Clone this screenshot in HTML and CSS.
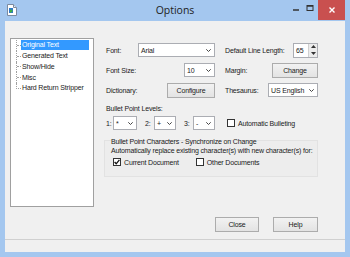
FILE: index.html
```html
<!DOCTYPE html>
<html lang="en">
<head>
  <meta charset="UTF-8" />
  <title>Options</title>
  <link rel="stylesheet" href="styles.css">
</head>
<body>
  <div class="window">
    <!-- Title bar -->
    <div class="titlebar">
      <svg class="app-icon" width="10" height="12" viewBox="0 0 10 12">
        <path d="M0.5 0.5h6l3 3v8h-9z" fill="#fff" stroke="#7a8aa0"/>
        <path d="M6.5 0.5v3h3" fill="#dde6f0" stroke="#7a8aa0"/>
        <rect x="2" y="4" width="4" height="5" fill="#2f78c8"/>
        <path d="M3 5l3 2-3 2z" fill="#3fb040"/>
      </svg>
      <div class="title">Options</div>
      <div class="controls">
        <span class="ctl"><svg width="8" height="8" viewBox="0 0 8 8"><path d="M1 6h6" stroke="#333" stroke-width="1.5"/></svg></span>
        <span class="ctl"><svg width="8" height="8" viewBox="0 0 8 8"><rect x="1" y="1.5" width="6" height="5" fill="none" stroke="#333"/><path d="M1 2h6" stroke="#333" stroke-width="1.5"/></svg></span>
        <span class="ctl close"><svg width="8" height="8" viewBox="0 0 8 8"><path d="M1.5 1.5l5 5M6.5 1.5l-5 5" stroke="#fff" stroke-width="1.4"/></svg></span>
      </div>
    </div>

    <div class="client">
      <div class="main">
        <!-- Page tree -->
        <ul class="tree">
          <li><span class="node selected">Original Text</span></li>
          <li><span class="node">Generated Text</span></li>
          <li><span class="node">Show/Hide</span></li>
          <li><span class="node">Misc</span></li>
          <li class="last"><span class="node">Hard Return Stripper</span></li>
        </ul>

        <!-- Page content -->
        <div class="page">
          <div class="form-grid">
            <div class="cell">
              <span>Font:</span>
              <div class="select w-font"><span>Arial</span><svg class="chev" width="5" height="3" viewBox="0 0 5 3"><path d="M0.3 0.3l2.2 2.2 2.2-2.2" fill="none" stroke="#444"/></svg></div>
            </div>
            <div class="cell">
              <span>Default Line Length:</span>
              <div class="spin">
                <span>65</span>
                <div class="spin-btns">
                  <svg width="5" height="3" viewBox="0 0 5 3"><path d="M0 3l2.5-3 2.5 3z" fill="#333"/></svg>
                  <svg width="5" height="3" viewBox="0 0 5 3"><path d="M0 0l2.5 3 2.5-3z" fill="#333"/></svg>
                </div>
              </div>
            </div>

            <div class="cell">
              <span>Font Size:</span>
              <div class="select w-size"><span>10</span><svg class="chev" width="5" height="3" viewBox="0 0 5 3"><path d="M0.3 0.3l2.2 2.2 2.2-2.2" fill="none" stroke="#444"/></svg></div>
            </div>
            <div class="cell">
              <span>Margin:</span>
              <div class="btn w-change">Change</div>
            </div>

            <div class="cell">
              <span>Dictionary:</span>
              <div class="btn w-config">Configure</div>
            </div>
            <div class="cell">
              <span>Thesaurus:</span>
              <div class="select w-thes"><span>US English</span><svg class="chev" width="5" height="3" viewBox="0 0 5 3"><path d="M0.3 0.3l2.2 2.2 2.2-2.2" fill="none" stroke="#444"/></svg></div>
            </div>
          </div>

          <div class="section-label">Bullet Point Levels:</div>
          <div class="levels">
            <div class="level"><span class="lvl-num">1:</span><div class="select w-lvl1"><span>*</span><svg class="chev" width="5" height="3" viewBox="0 0 5 3"><path d="M0.3 0.3l2.2 2.2 2.2-2.2" fill="none" stroke="#444"/></svg></div></div>
            <div class="level"><span class="lvl-num">2:</span><div class="select w-lvl"><span>+</span><svg class="chev" width="5" height="3" viewBox="0 0 5 3"><path d="M0.3 0.3l2.2 2.2 2.2-2.2" fill="none" stroke="#444"/></svg></div></div>
            <div class="level"><span class="lvl-num">3:</span><div class="select w-lvl"><span>-</span><svg class="chev" width="5" height="3" viewBox="0 0 5 3"><path d="M0.3 0.3l2.2 2.2 2.2-2.2" fill="none" stroke="#444"/></svg></div></div>
            <label class="check auto-bullet"><span class="box"></span>Automatic Bulleting</label>
          </div>

          <div class="group">
            <div class="group-title">Bullet Point Characters - Synchronize on Change</div>
            <div class="group-text">Automatically replace existing character(s) with new character(s) for:</div>
            <div class="group-checks">
              <label class="check"><span class="box"><svg width="6" height="6" viewBox="0 0 6 6"><path d="M0.6 3l1.6 1.8 3.2-4" fill="none" stroke="#111" stroke-width="1.3"/></svg></span>Current Document</label>
              <label class="check other"><span class="box"></span>Other Documents</label>
            </div>
          </div>

          <div class="actions">
            <div class="btn w-close">Close</div>
            <div class="btn w-help">Help</div>
          </div>
        </div>
      </div>
      <div class="statusbar"></div>
    </div>
  </div>
</body>
</html>
```

FILE: styles.css
```css
html, body {
  margin: 0;
  overflow: hidden;
}

body {
  font-family: "Liberation Sans", Arial, sans-serif;
  font-size: 7px;
  letter-spacing: -0.15px;
  color: #1a1a1a;
  white-space: nowrap;
}

.window {
  width: 350px;
  height: 257px;
  box-sizing: border-box;
  padding: 0 5px 5px;
  background-color: #a4c7ef;
  display: flex;
  flex-direction: column;
}

/* title bar */
.titlebar {
  height: 21px;
  display: grid;
  grid-template-columns: 1fr auto 1fr;
  align-items: start;
}

.app-icon {
  margin: 4px 0 0 2px;
}

.title {
  font-family: "Open Sans", "Noto Sans", sans-serif;
  font-size: 10.5px;
  letter-spacing: 0;
  color: #222;
  line-height: 21px;
}

.controls {
  justify-self: end;
  display: flex;
  align-items: flex-start;
}

.ctl {
  width: 14px;
  height: 16px;
  display: flex;
  align-items: center;
  justify-content: center;
}

.ctl.close {
  width: 27px;
  height: 20px;
  margin-left: 1px;
  background-color: #c9504f;
}

/* client area */
.client {
  flex: 1;
  background-color: #f0f0f0;
  display: flex;
  flex-direction: column;
}

.main {
  flex: 1;
  display: flex;
  gap: 10px;
  padding: 17px 0 7px 5px;
}

.tree {
  list-style: none;
  margin: 0;
  width: 84px;
  height: 169px;
  box-sizing: border-box;
  padding: 1px 4px 0 4px;
  background-color: #fff;
  border: 1px solid #a0a0a0;
}

.tree li {
  height: 10.75px;
  display: flex;
  align-items: center;
  margin-left: 1px;
  border-left: 1px dotted #a0a0a0;
}

.tree li::before {
  content: "";
  width: 4px;
  border-top: 1px dotted #a0a0a0;
}

.tree li.last {
  border-left-color: transparent;
}

.tree li.last::before {
  align-self: flex-start;
  height: 5px;
  margin-left: -1px;
  border-left: 1px dotted #a0a0a0;
  border-bottom: 1px dotted #a0a0a0;
  border-top: none;
}

.node {
  flex: 1;
  height: 10px;
  line-height: 10px;
  padding-left: 1px;
}

.node.selected {
  background-color: #3399ff;
  color: #fff;
}

/* right page */
.page {
  width: 214px;
  display: flex;
  flex-direction: column;
  padding-top: 5px;
}

.form-grid {
  display: grid;
  grid-template-columns: 109px 93px;
  column-gap: 10px;
  row-gap: 6px;
  padding-left: 2px;
}

.cell {
  height: 14px;
  display: flex;
  align-items: center;
  justify-content: space-between;
}

.select {
  height: 14px;
  box-sizing: border-box;
  display: flex;
  align-items: center;
  justify-content: space-between;
  padding: 0 3px 0 2px;
  background-color: #fff;
  border: 1px solid #abadb3;
}

.chev {
  flex-shrink: 0;
}

.w-font { width: 77px; }
.w-size { width: 31px; }
.w-thes { width: 50px; }
.w-lvl1 { width: 24px; }
.w-lvl { width: 22px; }

.btn {
  height: 15px;
  box-sizing: border-box;
  display: flex;
  align-items: center;
  justify-content: center;
  border: 1px solid #acacac;
  background: linear-gradient(#f2f2f2, #e3e3e3);
}

.w-change { width: 46px; }
.w-config { width: 48px; }
.w-close { width: 44px; }
.w-help { width: 45px; }

.spin {
  width: 25px;
  height: 15px;
  box-sizing: border-box;
  display: flex;
  align-items: center;
  justify-content: space-between;
  padding-left: 2px;
  background-color: #fff;
  border: 1px solid #abadb3;
}

.spin-btns {
  width: 8px;
  height: 13px;
  display: flex;
  flex-direction: column;
  align-items: center;
  justify-content: space-around;
  background-color: #ececec;
  border-left: 1px solid #d0d0d0;
}

.section-label {
  margin: 7px 0 0 2px;
  line-height: 9px;
}

.levels {
  display: flex;
  align-items: center;
  gap: 8px;
  height: 14px;
  margin: 3px 0 0 2px;
}

.level {
  display: flex;
  align-items: center;
}

.lvl-num {
  width: 9px;
}

.level:first-child .lvl-num {
  width: 7px;
}

.check {
  display: flex;
  align-items: center;
  gap: 3px;
}

.box {
  width: 8px;
  height: 8px;
  box-sizing: border-box;
  display: flex;
  align-items: center;
  justify-content: center;
  background-color: #fff;
  border: 1px solid #333;
}

.auto-bullet {
  margin-left: 4px;
}

/* group box */
.group {
  margin-top: 10px;
  height: 37px;
  box-sizing: border-box;
  padding: 0 0 0 6px;
  border: 1px solid #e2e2e2;
  background-color: #ededed;
}

.group-title {
  margin-top: -4px;
  line-height: 9px;
}

.group-text {
  line-height: 9px;
}

.group-checks {
  display: flex;
  margin: 3px 0 0 2px;
}

.group-checks .other {
  margin-left: 17px;
}

.actions {
  margin-top: auto;
  display: flex;
  justify-content: flex-end;
  gap: 14px;
}

.statusbar {
  height: 12px;
  border-top: 1px solid #d0d0d0;
  background-color: #f0f0f0;
}
```
